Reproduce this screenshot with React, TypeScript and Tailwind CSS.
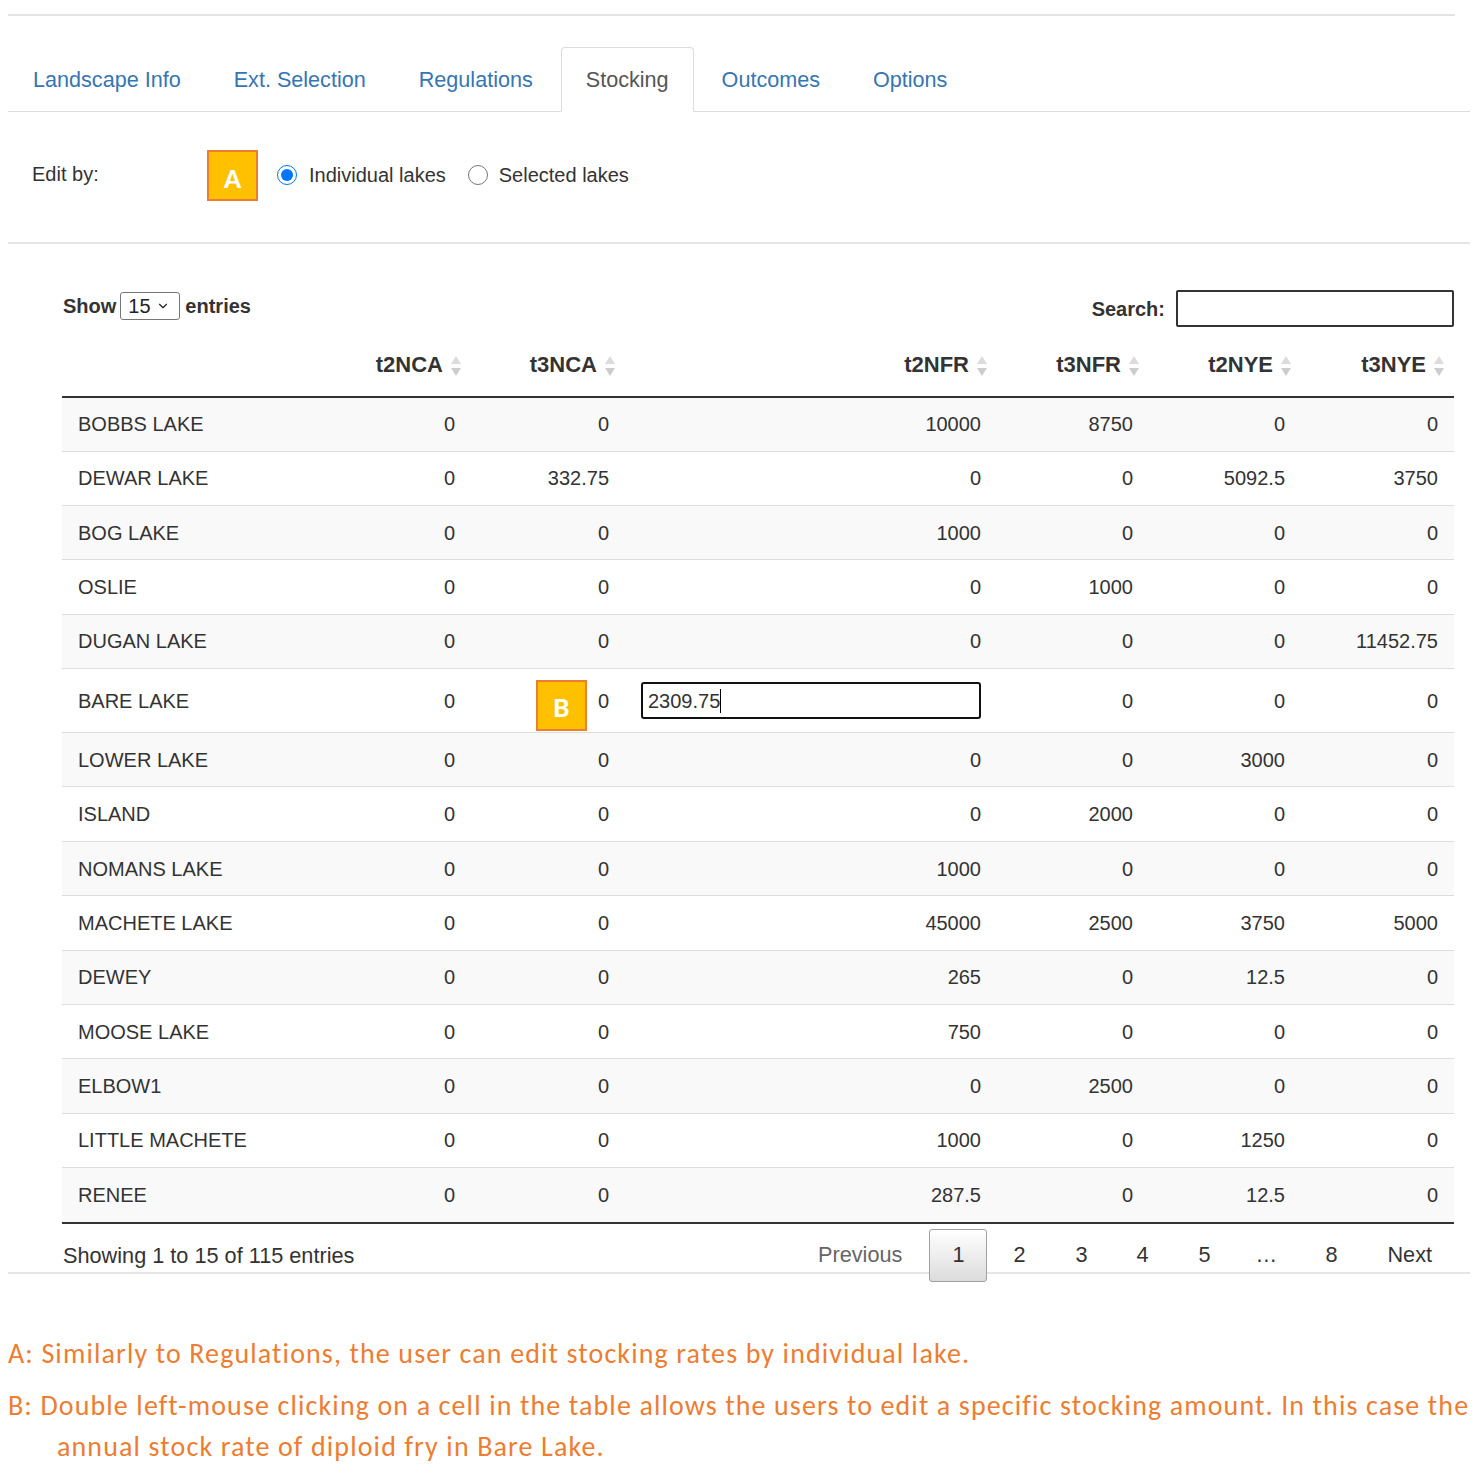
import React, { useState } from 'react'
import { ChevronDown } from 'lucide-react'

const tabs = ['Landscape Info', 'Ext. Selection', 'Regulations', 'Stocking', 'Outcomes', 'Options']
const cols = ['t2NCA', 't3NCA', 't2NFR', 't3NFR', 't2NYE', 't3NYE']

// name, then the six stocking values; null marks the cell being edited
const rows: [string, (string | null)[]][] = [
  ['BOBBS LAKE', ['0', '0', '10000', '8750', '0', '0']],
  ['DEWAR LAKE', ['0', '332.75', '0', '0', '5092.5', '3750']],
  ['BOG LAKE', ['0', '0', '1000', '0', '0', '0']],
  ['OSLIE', ['0', '0', '0', '1000', '0', '0']],
  ['DUGAN LAKE', ['0', '0', '0', '0', '0', '11452.75']],
  ['BARE LAKE', ['0', '0', null, '0', '0', '0']],
  ['LOWER LAKE', ['0', '0', '0', '0', '3000', '0']],
  ['ISLAND', ['0', '0', '0', '2000', '0', '0']],
  ['NOMANS LAKE', ['0', '0', '1000', '0', '0', '0']],
  ['MACHETE LAKE', ['0', '0', '45000', '2500', '3750', '5000']],
  ['DEWEY', ['0', '0', '265', '0', '12.5', '0']],
  ['MOOSE LAKE', ['0', '0', '750', '0', '0', '0']],
  ['ELBOW1', ['0', '0', '0', '2500', '0', '0']],
  ['LITTLE MACHETE', ['0', '0', '1000', '0', '1250', '0']],
  ['RENEE', ['0', '0', '287.5', '0', '12.5', '0']],
]

// page buttons after "1", with the left margin each one has in the picture
const pages: [string, string][] = [
  ['2', 'ml-[3px]'],
  ['3', 'ml-[4px]'],
  ['4', 'ml-[3px]'],
  ['5', 'ml-[4px]'],
  ['…', 'ml-[4px]'],
  ['8', 'ml-[7px]'],
]

const gridCols = 'grid grid-cols-[257px_152px_154px_372px_152px_152px_153px]'

function SortIcon() {
  return (
    <svg width="12" height="24" viewBox="0 0 12 24" className="absolute right-[9px] bottom-[18px]">
      <polygon points="1,10 6,2 11,10" fill="#dcdcdc" />
      <polygon points="1,14 6,22 11,14" fill="#cdcdcd" />
    </svg>
  )
}

function Marker({ letter }: { letter: string }) {
  return (
    <div className="w-[51px] h-[51px] bg-[#ffc000] border-2 border-[#ed7d31] flex items-center justify-center pt-[6px] text-white text-[29px] font-bold [font-family:Carlito,Lato,sans-serif]">
      {letter}
    </div>
  )
}

export default function App() {
  const [mode, setMode] = useState('individual')

  return (
    <div className="min-h-screen bg-white pt-[14px] pl-[8px] text-[#333] [font-family:'Liberation_Sans',Arial,sans-serif]">
      <div className="w-[1447px] h-[2px] bg-[#e3e3e3]" />

      <div className="w-[1462px] border-b-2 border-[#e5e5e5]">
        {/* tabs */}
        <div className="mt-[31px] flex gap-[3px] border-b border-[#ddd]">
          {tabs.map((t) => (
            <div
              key={t}
              className={
                t === 'Stocking'
                  ? '-mb-px h-[65px] px-[24px] pt-[2px] flex items-center text-[21.6px] text-[#555] bg-white border border-[#ddd] border-b-white rounded-t-[4px]'
                  : '-mb-px h-[65px] px-[24px] pt-[2px] flex items-center text-[21.6px] text-[#3676b3] border border-transparent'
              }
            >
              {t}
            </div>
          ))}
        </div>

        {/* edit by */}
        <div className="h-[130px] pt-[38px]">
          <div className="flex items-center h-[51px] pl-[24px] text-[20px]">
            <span className="w-[175px] -mt-[3px]">Edit by:</span>
            <Marker letter="A" />
            <label className="ml-[19px] flex items-center -mt-[2px]">
              <input
                type="radio"
                checked={mode === 'individual'}
                onChange={() => setMode('individual')}
                className="w-[20px] h-[20px] m-0 accent-[#0075ff]"
              />
              <span className="ml-[12px]">Individual lakes</span>
            </label>
            <label className="ml-[22px] flex items-center -mt-[2px]">
              <input
                type="radio"
                checked={mode === 'selected'}
                onChange={() => setMode('selected')}
                className="w-[20px] h-[20px] m-0 accent-[#0075ff]"
              />
              <span className="ml-[11px]">Selected lakes</span>
            </label>
          </div>
        </div>
        <div className="h-[2px] bg-[#e6e6e6]" />

        <div className="pl-[54px] pr-[16px]">
          {/* show / search */}
          <div className="mt-[46px] h-[37px] flex justify-between">
            <div className="mt-[2px] h-[28px] flex items-center text-[20px] font-bold">
              <span className="ml-px">Show</span>
              <div className="ml-[4px] w-[60px] h-[28px] border border-[#767676] rounded-[3px] flex items-center pl-[7px] gap-[5px] font-normal text-[#222]">
                <span>15</span>
                <ChevronDown size={14} strokeWidth={2} />
              </div>
              <span className="ml-[5px]">entries</span>
            </div>
            <div className="flex items-center text-[20px] font-bold">
              <span>Search:</span>
              <div className="ml-[11px] w-[278px] h-[37px] border-2 border-[#333] rounded-[2px]" />
            </div>
          </div>

          {/* header */}
          <div className={`${gridCols} h-[71px] items-end border-b-2 border-[#333] text-[22px] font-bold`}>
            <div />
            {cols.map((c) => (
              <div key={c} className="relative text-right pr-[28px] pb-[19px] leading-[25px]">
                {c}
                <SortIcon />
              </div>
            ))}
          </div>

          {/* body */}
          <div className="border-b-2 border-[#333] text-[20px]">
            {rows.map(([name, vals], i) => (
              <div
                key={name}
                className={`${gridCols} items-center ${
                  name === 'BARE LAKE' ? 'h-[64px]' : i === 0 ? 'h-[52.5px]' : 'h-[54.4px]'
                } ${i > 0 ? 'border-t border-[#ddd]' : ''} ${i % 2 === 0 ? 'bg-[#f9f9f9]' : 'bg-white'}`}
              >
                <div className="pl-[16px]">{name}</div>
                {vals.map((v, j) =>
                  v === null ? (
                    <div key={j} className="px-[16px]">
                      <div className="h-[37px] border-2 border-[#111] rounded-[3px] flex items-center pl-[5px] text-[#333]">
                        2309.75
                        <span className="w-px h-[24px] bg-black" />
                      </div>
                    </div>
                  ) : (
                    <div key={j} className="relative text-right pr-[16px]">
                      {name === 'BARE LAKE' && j === 1 && (
                        <div className="absolute left-[65px] top-1/2 -translate-y-[21px]">
                          <Marker letter="B" />
                        </div>
                      )}
                      {v}
                    </div>
                  )
                )}
              </div>
            ))}
          </div>

          {/* footer */}
          <div className="h-[48px] flex justify-between items-start text-[21.7px]">
            <div className="mt-[19px] ml-px leading-[25px]">Showing 1 to 15 of 115 entries</div>
            <div className="mt-[5px] flex items-center h-[53px]">
              <span className="pl-[22px] pr-[27px] text-[#666]">Previous</span>
              <span className="h-[53px] w-[58px] flex items-center justify-center border border-[#a0a0a0] rounded-[3px] bg-linear-to-b from-white to-[#dcdcdc]">
                1
              </span>
              {pages.map(([p, m]) => (
                <span key={p} className={`${m} w-[58px] flex justify-center`}>
                  {p}
                </span>
              ))}
              <span className="ml-[5px] px-[22px]">Next</span>
            </div>
          </div>
        </div>
      </div>

      {/* notes */}
      <div className="mt-[62px] text-[#ed7d31] text-[28px] tracking-[1.12px] [font-family:Carlito,Lato,sans-serif] whitespace-nowrap">
        <div className="leading-[35px]">A: Similarly to Regulations, the user can edit stocking rates by individual lake.</div>
        <div className="mt-[14px] leading-[41px]">
          B: Double left-mouse clicking on a cell in the table allows the users to edit a specific stocking amount. In this case the
        </div>
        <div className="pl-[49px] leading-[41px]">annual stock rate of diploid fry in Bare Lake.</div>
      </div>
    </div>
  )
}
